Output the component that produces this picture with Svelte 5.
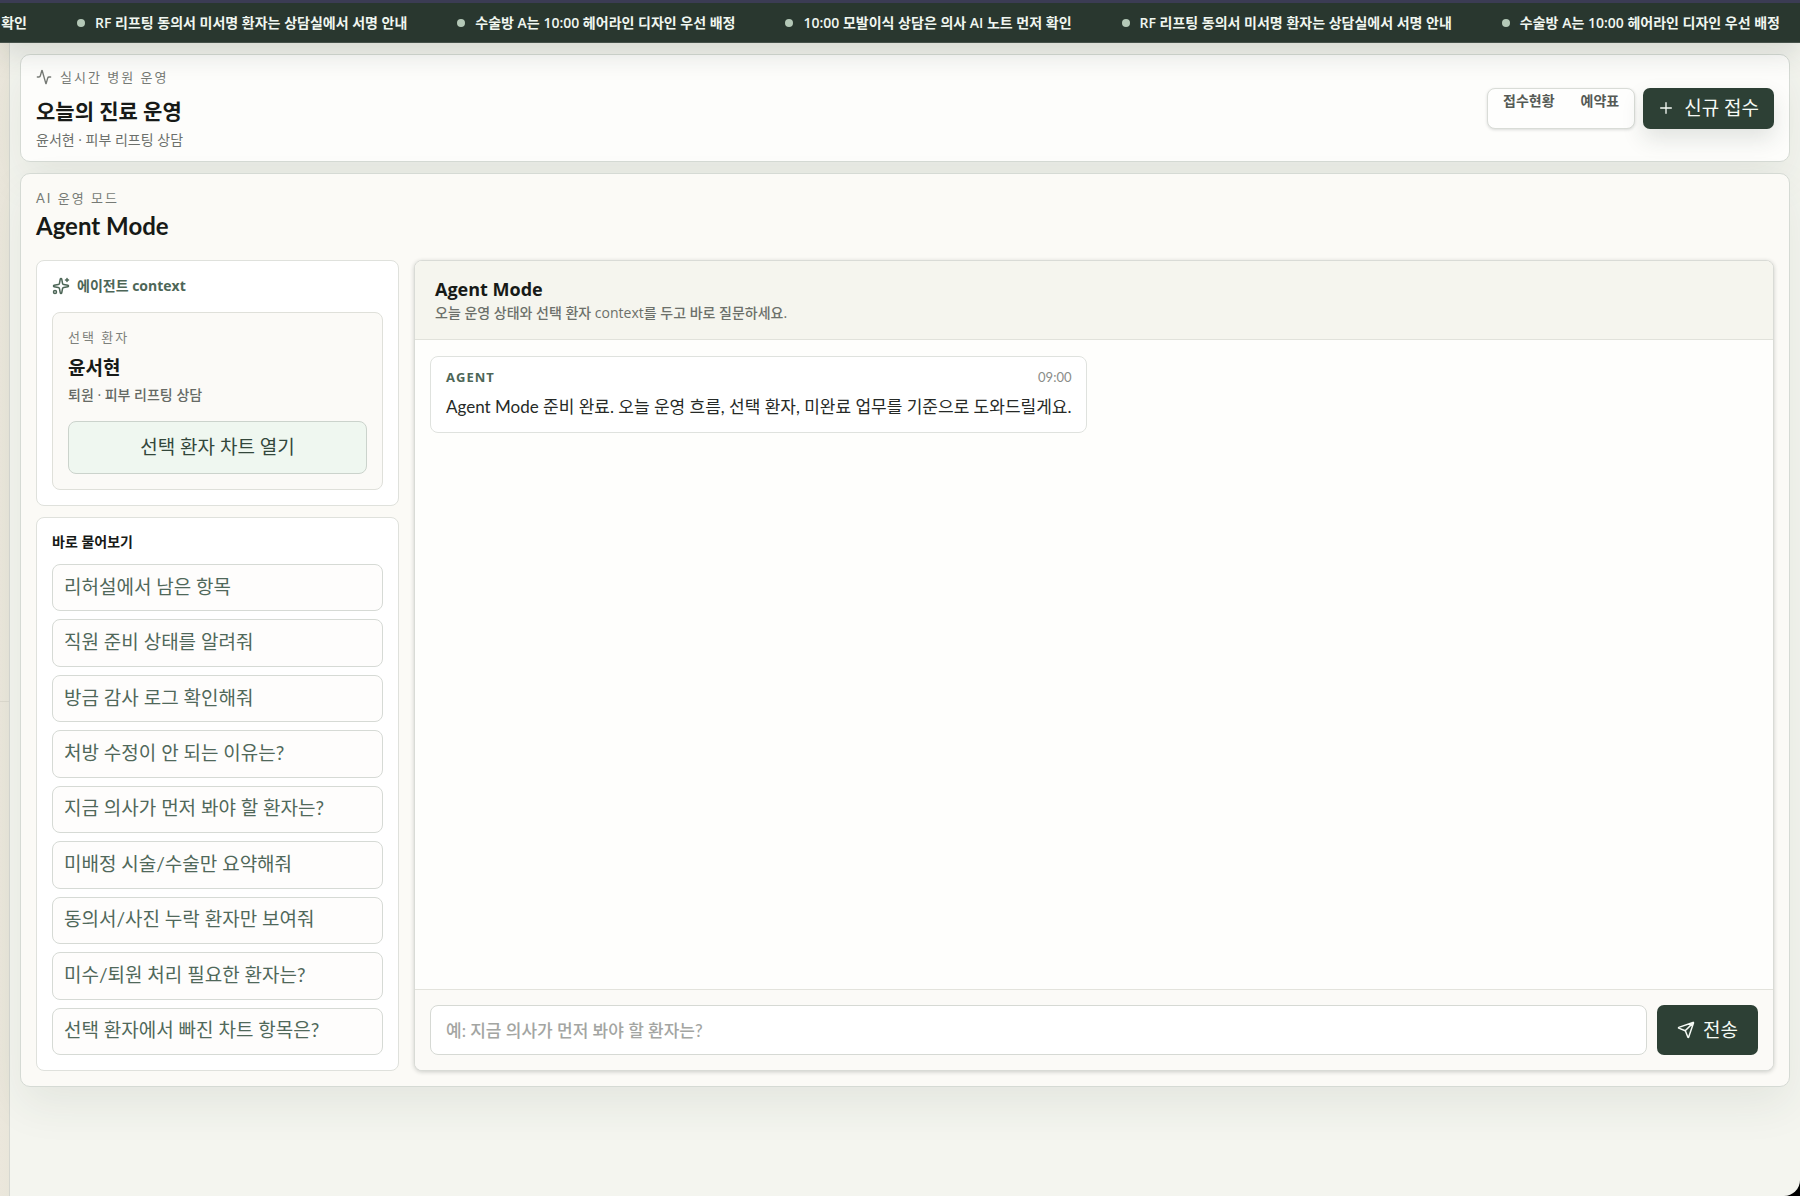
<script lang="ts">
  const notices = [
    '10:00 모발이식 상담은 의사 AI 노트 먼저 확인',
    'RF 리프팅 동의서 미서명 환자는 상담실에서 서명 안내',
    '수술방 A는 10:00 헤어라인 디자인 우선 배정',
  ];
  const ticker = [...notices, ...notices];

  const questions = [
    '리허설에서 남은 항목',
    '직원 준비 상태를 알려줘',
    '방금 감사 로그 확인해줘',
    '처방 수정이 안 되는 이유는?',
    '지금 의사가 먼저 봐야 할 환자는?',
    '미배정 시술/수술만 요약해줘',
    '동의서/사진 누락 환자만 보여줘',
    '미수/퇴원 처리 필요한 환자는?',
    '선택 환자에서 빠진 차트 항목은?',
  ];

  let draft = $state('');
</script>

<div class="app">
  <div class="ticker">
    {#each ticker as notice}
      <span class="notice"><i class="dot"></i>{notice}</span>
    {/each}
  </div>

  <div class="body">
    <aside class="rail"><div class="rail-top"></div><div class="rail-bottom"></div></aside>

    <main class="workspace">
      <header class="card topbar">
        <div>
          <p class="eyebrow">
            <svg class="ic-sm" viewBox="0 0 24 24"><path d="M22 12h-2.48a2 2 0 0 0-1.93 1.46l-2.35 8.36a.25.25 0 0 1-.48 0L9.24 2.18a.25.25 0 0 0-.48 0l-2.35 8.36A2 2 0 0 1 4.49 12H2" /></svg>
            실시간 병원 운영
          </p>
          <h1>오늘의 진료 운영</h1>
          <p class="sub">윤서현 · 피부 리프팅 상담</p>
        </div>
        <div class="actions">
          <nav class="tabs">
            <button type="button">접수현황</button>
            <button type="button">예약표</button>
          </nav>
          <button type="button" class="primary new">
            <svg class="ic-sm" viewBox="0 0 24 24"><path d="M4 12h16M12 4v16" /></svg>
            신규 접수
          </button>
        </div>
      </header>

      <section class="card panel">
        <p class="eyebrow">AI 운영 모드</p>
        <h2>Agent Mode</h2>

        <div class="columns">
          <div class="side">
            <section class="box">
              <h3 class="context-title">
                <svg class="ic" viewBox="0 0 24 24"><path d="M11.017 2.814a1 1 0 0 1 1.966 0l1.051 5.558a2 2 0 0 0 1.594 1.594l5.558 1.051a1 1 0 0 1 0 1.966l-5.558 1.051a2 2 0 0 0-1.594 1.594l-1.051 5.558a1 1 0 0 1-1.966 0l-1.051-5.558a2 2 0 0 0-1.594-1.594l-5.558-1.051a1 1 0 0 1 0-1.966l5.558-1.051a2 2 0 0 0 1.594-1.594zM20 2v4M22 4h-4" /><circle cx="4" cy="20" r="2" /></svg>
                에이전트 context
              </h3>
              <div class="patient">
                <p class="eyebrow">선택 환자</p>
                <p class="name">윤서현</p>
                <p class="status">퇴원 · 피부 리프팅 상담</p>
                <button type="button" class="chart">선택 환자 차트 열기</button>
              </div>
            </section>

            <section class="box ask">
              <h3>바로 물어보기</h3>
              {#each questions as question}
                <button type="button" class="question" onclick={() => (draft = question)}>{question}</button>
              {/each}
            </section>
          </div>

          <section class="chat">
            <header class="chat-head">
              <h3>Agent Mode</h3>
              <p>오늘 운영 상태와 선택 환자 context를 두고 바로 질문하세요.</p>
            </header>
            <div class="log">
              <article class="message">
                <div class="meta"><strong>AGENT</strong><time>09:00</time></div>
                <p>Agent Mode 준비 완료. 오늘 운영 흐름, 선택 환자, 미완료 업무를 기준으로 도와드릴게요.</p>
              </article>
            </div>
            <form class="composer" onsubmit={(e) => e.preventDefault()}>
              <input type="text" aria-label="질문" placeholder="예: 지금 의사가 먼저 봐야 할 환자는?" bind:value={draft} />
              <button type="submit" class="primary send">
                <svg class="ic" viewBox="0 0 24 24"><path d="M14.536 21.686a.5.5 0 0 0 .937-.024l6.5-19a.496.496 0 0 0-.635-.635l-19 6.5a.5.5 0 0 0-.024.937l7.93 3.18a2 2 0 0 1 1.112 1.11zM21.854 2.147l-10.94 10.939" /></svg>
                전송
              </button>
            </form>
          </section>
        </div>
      </section>
    </main>
  </div>
</div>

<style>
  :global(body) {
    background: #000;
  }
  .app,
  .app * {
    box-sizing: border-box;
  }
  .app {
    --display: Lato, 'Noto Sans CJK KR', sans-serif;
    display: flex;
    flex-direction: column;
    min-height: 100vh;
    overflow: hidden;
    border-bottom-right-radius: 16px;
    background: #f4f5ef;
    color: #171a17;
    font-family: 'Open Sans', 'Noto Sans CJK KR', sans-serif;
    font-size: 14px;
    line-height: 20px;
  }
  h1, h2, h3, p {
    margin: 0;
  }
  button, input {
    font: inherit;
    color: inherit;
  }
  button {
    cursor: pointer;
  }
  svg {
    flex: none;
    fill: none;
    stroke: currentColor;
    stroke-width: 2;
    stroke-linecap: round;
    stroke-linejoin: round;
  }
  .ic { width: 18px; height: 18px; }
  .ic-sm { width: 16px; height: 16px; }

  .ticker {
    position: relative;
    z-index: 1;
    display: flex;
    justify-content: flex-end;
    align-items: center;
    gap: 50px;
    height: 43px;
    padding-right: 20px;
    border-top: 3px solid #3b3c54;
    border-bottom: 1px solid #46524b;
    background: #29372f;
    box-shadow: 0 12px 28px rgba(30, 44, 36, 0.13);
    color: #f0f6f0;
    font-weight: 600;
    white-space: nowrap;
  }
  .notice {
    display: flex;
    flex: none;
    align-items: center;
    gap: 10px;
  }
  .dot {
    width: 8px;
    height: 8px;
    border-radius: 50%;
    background: #b4c8b7;
  }

  .body {
    display: flex;
    flex: 1;
  }
  .rail {
    display: flex;
    flex-direction: column;
    flex: none;
    width: 10px;
    border-right: 1px solid #d5d7d1;
    background: linear-gradient(90deg, #ebe7dc, #e9e6da);
  }
  .rail-top {
    flex: 4;
    border-bottom: 1px solid #dcd9ce;
  }
  .rail-bottom {
    flex: 3;
  }
  .workspace {
    display: flex;
    flex: 1;
    flex-direction: column;
    gap: 11px;
    min-width: 0;
    padding: 11px 10px 109px;
  }
  .card {
    border: 1px solid #d5dad4;
    border-radius: 10px;
    box-shadow: 0 18px 44px rgba(40, 62, 50, 0.08);
  }
  .topbar {
    display: flex;
    align-items: center;
    justify-content: space-between;
    padding: 12px 15px 10px;
    background: #fdfdfb;
  }
  .eyebrow {
    display: flex;
    align-items: center;
    gap: 8px;
    color: #767a75;
    font-family: var(--display);
    font-size: 13px;
    line-height: 20px;
    letter-spacing: 2px;
  }
  h1 {
    margin-top: 8px;
    font-family: var(--display);
    font-size: 21px;
    font-weight: 600;
    line-height: 32px;
  }
  .sub {
    margin-top: 2px;
    color: #6c706b;
    line-height: 22px;
  }
  .actions {
    display: flex;
    gap: 8px;
    padding-bottom: 2px;
  }
  .tabs {
    display: flex;
    align-items: flex-start;
    gap: 2px;
    height: 41px;
    padding: 1px 3px;
    border: 1px solid #d9dcd7;
    border-radius: 8px;
    background: #fefefd;
    box-shadow: 0 1px 3px rgba(20, 30, 24, 0.15);
  }
  .tabs button {
    padding: 0 12px;
    border: 0;
    background: none;
    color: #555a55;
    font-weight: 600;
    line-height: 22px;
  }
  .primary {
    display: flex;
    align-items: center;
    justify-content: center;
    border: 0;
    border-radius: 7px;
    background: #2d4035;
    color: #f5faf5;
    font-family: var(--display);
    font-size: 19px;
  }
  .new {
    gap: 10px;
    padding: 0 15px;
    box-shadow: 0 10px 22px rgba(35, 55, 43, 0.13);
  }

  .panel {
    display: flex;
    flex: 1;
    flex-direction: column;
    padding: 14px 15px 15px;
    background: #fbfaf6;
  }
  h2 {
    margin-top: 2px;
    font-family: var(--display);
    font-size: 24px;
    font-weight: 700;
    line-height: 32px;
  }
  .columns {
    display: grid;
    flex: 1;
    grid-template-columns: 363px minmax(0, 1fr);
    gap: 15px;
    margin-top: 18px;
  }
  .side {
    display: flex;
    flex-direction: column;
    gap: 11px;
  }
  .box {
    padding: 15px;
    border: 1px solid #dfe1dc;
    border-radius: 8px;
    background: #fff;
  }
  h3 {
    font-size: 14px;
    font-weight: 700;
    line-height: 20px;
  }
  .context-title {
    display: flex;
    align-items: center;
    gap: 7px;
    color: #4d6657;
  }
  .patient {
    margin-top: 16px;
    padding: 14px 15px 15px;
    border: 1px solid #dfe0da;
    border-radius: 8px;
    background: #fbfaf7;
  }
  .patient .eyebrow {
    color: #7d807b;
  }
  .name {
    margin-top: 7px;
    font-size: 19px;
    font-weight: 700;
    line-height: 28px;
  }
  .status {
    margin-top: 1px;
    color: #666a65;
    font-weight: 500;
    line-height: 24px;
  }
  .chart {
    width: 100%;
    height: 53px;
    margin-top: 14px;
    padding-bottom: 3px;
    border: 1px solid #cbd3cc;
    border-radius: 8px;
    background: #eff7f0;
    color: #33473b;
    font-family: var(--display);
    font-size: 19px;
  }
  .ask {
    display: flex;
    flex: 1;
    flex-direction: column;
    gap: 8px;
    padding-top: 14px;
  }
  .ask h3 {
    margin-bottom: 4px;
  }
  .question {
    flex: 1;
    padding: 0 11px 2px;
    border: 1px solid #d6dad5;
    border-radius: 8px;
    background: #fefdfc;
    color: #50685a;
    font-family: var(--display);
    font-size: 19px;
    text-align: left;
  }

  .chat {
    display: flex;
    flex-direction: column;
    overflow: hidden;
    border: 1px solid #d9dbd6;
    border-radius: 8px;
    background: #fefefc;
    box-shadow: 0 1px 4px rgba(20, 30, 24, 0.2);
  }
  .chat-head {
    padding: 16px 20px 14px;
    border-bottom: 1px solid #e1e2db;
    background: #f5f5ee;
  }
  .chat-head h3 {
    font-size: 18px;
    line-height: 24px;
  }
  .chat-head p {
    color: #6c706a;
    font-weight: 500;
    line-height: 24px;
  }
  .log {
    flex: 1;
    padding: 16px 15px;
  }
  .message {
    width: fit-content;
    padding: 10px 15px 11px;
    border: 1px solid #dfe2de;
    border-radius: 8px;
    background: #fff;
  }
  .meta {
    display: flex;
    align-items: center;
    justify-content: space-between;
    color: #4d6657;
    font-size: 13px;
    letter-spacing: 1px;
    line-height: 20px;
  }
  .meta time {
    color: #8a8d89;
    font-family: var(--display);
    letter-spacing: 0;
  }
  .message p {
    margin-top: 6px;
    color: #262a27;
    font-family: var(--display);
    font-size: 17px;
    line-height: 28px;
  }
  .composer {
    display: flex;
    gap: 10px;
    padding: 15px;
    border-top: 1px solid #e3e3dc;
    background: #fbfaf7;
  }
  .composer input {
    flex: 1;
    min-width: 0;
    height: 50px;
    padding: 0 15px;
    border: 1px solid #d6d9d4;
    border-radius: 8px;
    background: #fff;
    font-family: var(--display);
    font-size: 17px;
    font-weight: 500;
    outline: none;
  }
  .composer input::placeholder {
    color: #a3a5a2;
    opacity: 1;
  }
  .send {
    gap: 8px;
    padding: 0 20px;
  }
</style>
